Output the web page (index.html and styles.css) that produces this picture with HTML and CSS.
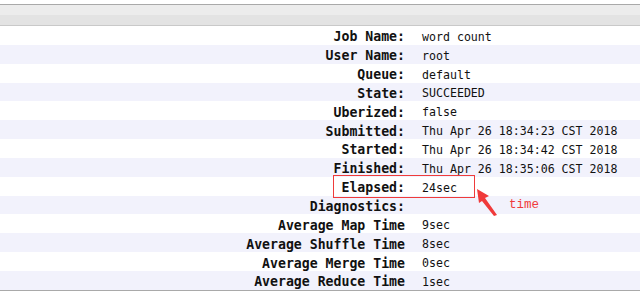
FILE: index.html
```html
<!DOCTYPE html>
<html lang="en">
<head>
  <meta charset="UTF-8">
  <title>Job Overview</title>
  <link rel="stylesheet" href="styles.css">
</head>
<body>

  <div class="page">
    <div class="table-head"></div>

    <div class="info">
      <div class="row"><span class="key">Job Name:</span><span class="val">word count</span></div>
      <div class="row"><span class="key">User Name:</span><span class="val">root</span></div>
      <div class="row"><span class="key">Queue:</span><span class="val">default</span></div>
      <div class="row"><span class="key">State:</span><span class="val">SUCCEEDED</span></div>
      <div class="row"><span class="key">Uberized:</span><span class="val">false</span></div>
      <div class="row"><span class="key">Submitted:</span><span class="val">Thu Apr 26 18:34:23 CST 2018</span></div>
      <div class="row"><span class="key">Started:</span><span class="val">Thu Apr 26 18:34:42 CST 2018</span></div>
      <div class="row"><span class="key">Finished:</span><span class="val">Thu Apr 26 18:35:06 CST 2018</span></div>
      <div class="row"><span class="key">Elapsed:</span><span class="val">24sec</span></div>
      <div class="row"><span class="key">Diagnostics:</span><span class="val"></span></div>
      <div class="row"><span class="key">Average Map Time</span><span class="val">9sec</span></div>
      <div class="row"><span class="key">Average Shuffle Time</span><span class="val">8sec</span></div>
      <div class="row"><span class="key">Average Merge Time</span><span class="val">0sec</span></div>
      <div class="row"><span class="key">Average Reduce Time</span><span class="val">1sec</span></div>
    </div>

    <!-- annotation drawn over the table -->
    <div class="mark-box"></div>
    <svg class="mark-arrow" width="30" height="32" viewBox="0 0 30 32">
      <polygon points="1,1 13,8 9,10 21,27 18,28 6,13 3,15" fill="#f03a3a"/>
    </svg>
    <span class="mark-label">time</span>
  </div>

</body>
</html>
```

FILE: styles.css
```css
body {
  margin: 0;
  background: #fff;
  color: #111;
}

.page {
  position: relative;
  padding-top: 4px;
}

.table-head {
  height: 20px;
  border-top: 1px solid #a9a9a9;
  border-bottom: 1px solid #c9c9c9;
  background: linear-gradient(#ececec 50%, #e3e3e3 50%);
}

.info {
  border-bottom: 1px solid #a9a9a9;
}

.row {
  display: flex;
  align-items: center;
  box-sizing: border-box;
  height: 18.857px;
  padding-top: 3px;
}

.row:nth-child(even) {
  background: #f2f2fc;
}

.key {
  width: 405px;
  flex-shrink: 0;
  text-align: right;
  font-family: "DejaVu Sans Mono", monospace;
  font-weight: bold;
  font-size: 13.2px;
  white-space: pre;
}

.val {
  padding-left: 17px;
  font-family: "DejaVu Sans Mono", monospace;
  font-size: 11.6px;
  white-space: pre;
}

.mark-box {
  position: absolute;
  left: 333px;
  top: 175px;
  width: 140px;
  height: 21px;
  border: 1.5px solid #ef3b3b;
}

.mark-arrow {
  position: absolute;
  left: 476px;
  top: 188px;
}

.mark-label {
  position: absolute;
  left: 509px;
  top: 198px;
  font-family: "Liberation Mono", monospace;
  font-size: 12.5px;
  color: #f03a3a;
}
```
